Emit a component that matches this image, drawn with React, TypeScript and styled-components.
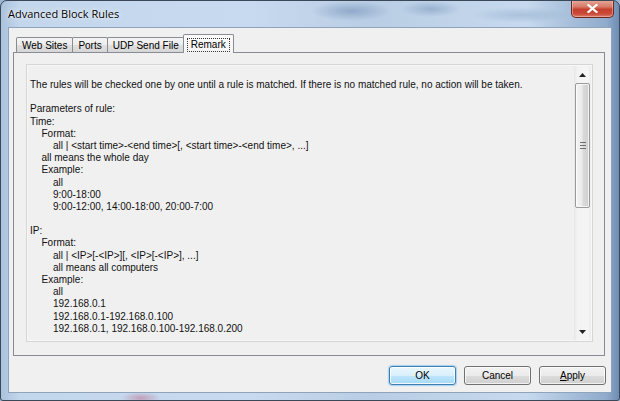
import React from "react";
import styled, { createGlobalStyle, css } from "styled-components";

const Global = createGlobalStyle`
  html, body {
    margin: 0;
    padding: 0;
    width: 620px;
    height: 401px;
    overflow: hidden;
    background: #9fb6d0;
  }
  #root { width: 620px; height: 401px; }
  * { box-sizing: border-box; }
`;

const Window = styled.div`
  width: 620px;
  height: 401px;
  display: flex;
  flex-direction: column;
  border: 1px solid #3a4858;
  border-radius: 7px 7px 3px 3px;
  overflow: hidden;
  background:
    radial-gradient(ellipse 40px 10px at 350px 10px, rgba(110, 140, 180, 0.55), rgba(110, 140, 180, 0) 100%),
    radial-gradient(ellipse 30px 8px at 430px 8px, rgba(110, 140, 180, 0.45), rgba(110, 140, 180, 0) 100%),
    radial-gradient(ellipse 50px 8px at 520px 14px, rgba(120, 150, 185, 0.35), rgba(120, 150, 185, 0) 100%),
    radial-gradient(ellipse 20px 6px at 140px 397px, rgba(190, 120, 150, 0.6), rgba(190, 120, 150, 0) 100%),
    linear-gradient(90deg, #aac2dc 0%, #c2d6ec 3%, #c8daef 40%, #b9cde4 60%, #c6d9ee 85%, #8faacb 98%, #6f8db3 100%);
  font-family: "Liberation Sans", Arial, sans-serif;
  color: #000;
`;

const TitleBar = styled.div`
  height: 26px;
  flex: none;
  display: flex;
  align-items: flex-start;
`;

const Title = styled.div`
  padding: 6px 0 0 7px;
  font-family: "Open Sans", "Liberation Sans", sans-serif;
  font-size: 11px;
  line-height: 14px;
  color: #000;
  text-shadow: 0 0 6px rgba(255, 255, 255, 0.9), 0 0 2px rgba(255, 255, 255, 0.9);
`;

const CloseButton = styled.div`
  margin-left: auto;
  margin-right: 5px;
  margin-top: -1px;
  width: 43px;
  height: 18px;
  border: 1px solid #6a2a22;
  border-top: none;
  border-radius: 0 0 5px 5px;
  background: linear-gradient(180deg, #e8ac9f 0%, #d77a68 40%, #c5402c 55%, #c9493a 80%, #dd7b66 100%);
  box-shadow: inset 0 0 0 1px rgba(255, 210, 200, 0.45);
  display: flex;
  align-items: center;
  justify-content: center;
`;

const Frame = styled.div`
  flex: 1;
  display: flex;
  padding: 0 7px 7px 7px;
  min-height: 0;
`;

const Client = styled.div`
  flex: 1;
  display: flex;
  flex-direction: column;
  background: #f0f0f0;
  border: 1px solid #8ea4bd;
  padding: 6px 6px 0 4px;
`;

const TabStrip = styled.div`
  display: flex;
  align-items: flex-end;
  height: 19px;
  padding-left: 3px;
  flex: none;
`;

const Tab = styled.div<{ $active?: boolean }>`
  font-size: 10px;
  line-height: 13px;
  display: flex;
  align-items: center;
  justify-content: center;
  border: 1px solid #898c95;
  border-bottom: none;
  border-radius: 2px 2px 0 0;
  ${(p) =>
    p.$active
      ? css`
          position: relative;
          z-index: 1;
          height: 19px;
          margin: 0 -2px 0 -1px;
          padding: 0 3px;
          background: linear-gradient(180deg, #fbfbfb 0%, #f4f4f4 100%);
        `
      : css`
          height: 15px;
          margin-bottom: 1px;
          padding: 0 5px;
          margin-right: -1px;
          background: linear-gradient(180deg, #f4f4f4 0%, #ececec 50%, #e0e0e0 50%, #d6d6d6 100%);
        `}
`;

const Focus = styled.span`
  border: 1px dotted #333;
  padding: 0 3px 0 3px;
  margin-top: 2px;
  line-height: 12px;
`;

const Panel = styled.div`
  flex: none;
  height: 304px;
  margin-top: -1px;
  border: 1px solid #898c95;
  background: #f0f0f0;
  padding: 11px 11px 13px 12px;
  display: flex;
`;

const TextBox = styled.div`
  flex: 1;
  display: flex;
  border: 1px solid #d6d6d6;
  box-shadow: inset 0 0 0 1px #f7f7f7;
  background: #f0f0f0;
`;

const TextArea = styled.div`
  flex: 1;
  padding: 14px 0 0 3px;
  font-size: 10px;
  line-height: 12.2px;
  color: #111;
  white-space: pre;
  overflow: hidden;
`;

const Line = styled.div<{ $level: number }>`
  padding-left: ${(p) => p.$level * 11.5}px;
  height: 12.2px;
`;

const ScrollBar = styled.div`
  width: 17px;
  margin: 1px 1px 1px 0;
  display: flex;
  flex-direction: column;
  background: linear-gradient(90deg, #e6e6e6 0%, #f3f3f3 20%, #f5f5f5 80%, #ececec 100%);
`;

const ArrowButton = styled.div`
  height: 17px;
  flex: none;
  display: flex;
  align-items: center;
  justify-content: center;
`;

const Thumb = styled.div`
  height: 125px;
  flex: none;
  margin: 0 1px;
  border: 1px solid #9a9a9a;
  border-radius: 2px;
  background: linear-gradient(90deg, #f4f4f4 0%, #ebebeb 45%, #dadada 55%, #cfcfcf 100%);
  box-shadow: inset 0 0 0 1px rgba(255, 255, 255, 0.7);
  display: flex;
  align-items: center;
  justify-content: center;
`;

const Track = styled.div`
  flex: 1;
`;

const ButtonRow = styled.div`
  display: flex;
  justify-content: flex-end;
  gap: 8px;
  margin-top: 10px;
  margin-right: -1px;
`;

const Button = styled.div<{ $default?: boolean }>`
  width: 67px;
  height: 19px;
  display: flex;
  align-items: center;
  justify-content: center;
  font-size: 10px;
  border-radius: 3px;
  ${(p) =>
    p.$default
      ? css`
          border: 1px solid #3c7fb1;
          background: linear-gradient(180deg, #eaf6fd 0%, #d9f0fc 50%, #bee6fd 50%, #a7d9f5 100%);
          box-shadow: inset 0 0 0 1px rgba(255, 255, 255, 0.8), 0 0 1px 1px rgba(120, 190, 240, 0.6);
        `
      : css`
          border: 1px solid #707070;
          background: linear-gradient(180deg, #f2f2f2 0%, #ebebeb 50%, #dddddd 50%, #cfcfcf 100%);
          box-shadow: inset 0 0 0 1px rgba(255, 255, 255, 0.7);
        `}
`;

const AccessKey = styled.span`
  text-decoration: underline;
`;

const lines: [number, string][] = [
  [0, "The rules will be checked one by one until a rule is matched. If there is no matched rule, no action will be taken."],
  [0, ""],
  [0, "Parameters of rule:"],
  [0, "Time:"],
  [1, "Format:"],
  [2, "all | <start time>-<end time>[, <start time>-<end time>, ...]"],
  [1, "all means the whole day"],
  [1, "Example:"],
  [2, "all"],
  [2, "9:00-18:00"],
  [2, "9:00-12:00, 14:00-18:00, 20:00-7:00"],
  [0, ""],
  [0, "IP:"],
  [1, "Format:"],
  [2, "all | <IP>[-<IP>][, <IP>[-<IP>], ...]"],
  [2, "all means all computers"],
  [1, "Example:"],
  [2, "all"],
  [2, "192.168.0.1"],
  [2, "192.168.0.1-192.168.0.100"],
  [2, "192.168.0.1, 192.168.0.100-192.168.0.200"],
];

const Arrow = ({ up }: { up?: boolean }) => (
  <svg width="7" height="4" viewBox="0 0 7 4">
    <path d={up ? "M0 4 L3.5 0 L7 4 Z" : "M0 0 L7 0 L3.5 4 Z"} fill="#222" />
  </svg>
);

const Gripper = () => (
  <svg width="6" height="7" viewBox="0 0 6 7">
    <path d="M0 0.5 H6 M0 3.5 H6 M0 6.5 H6" stroke="#6f6f6f" strokeWidth="1" />
  </svg>
);

const CloseGlyph = () => (
  <svg width="11" height="9" viewBox="0 0 11 9">
    <path d="M1.5 1 L9.5 8 M9.5 1 L1.5 8" stroke="#fff" strokeWidth="2.2" strokeLinecap="square" />
  </svg>
);

export default function App() {
  return (
    <>
      <Global />
      <Window>
        <TitleBar>
          <Title>Advanced Block Rules</Title>
          <CloseButton>
            <CloseGlyph />
          </CloseButton>
        </TitleBar>
        <Frame>
          <Client>
            <TabStrip>
              <Tab>Web Sites</Tab>
              <Tab>Ports</Tab>
              <Tab>UDP Send File</Tab>
              <Tab $active>
                <Focus>Remark</Focus>
              </Tab>
            </TabStrip>
            <Panel>
              <TextBox>
                <TextArea>
                  {lines.map(([lvl, text], i) => (
                    <Line key={i} $level={lvl}>
                      {text}
                    </Line>
                  ))}
                </TextArea>
                <ScrollBar>
                  <ArrowButton>
                    <Arrow up />
                  </ArrowButton>
                  <Thumb>
                    <Gripper />
                  </Thumb>
                  <Track />
                  <ArrowButton>
                    <Arrow />
                  </ArrowButton>
                </ScrollBar>
              </TextBox>
            </Panel>
            <ButtonRow>
              <Button $default>OK</Button>
              <Button>Cancel</Button>
              <Button>
                <span>
                  <AccessKey>A</AccessKey>pply
                </span>
              </Button>
            </ButtonRow>
          </Client>
        </Frame>
      </Window>
    </>
  );
}
